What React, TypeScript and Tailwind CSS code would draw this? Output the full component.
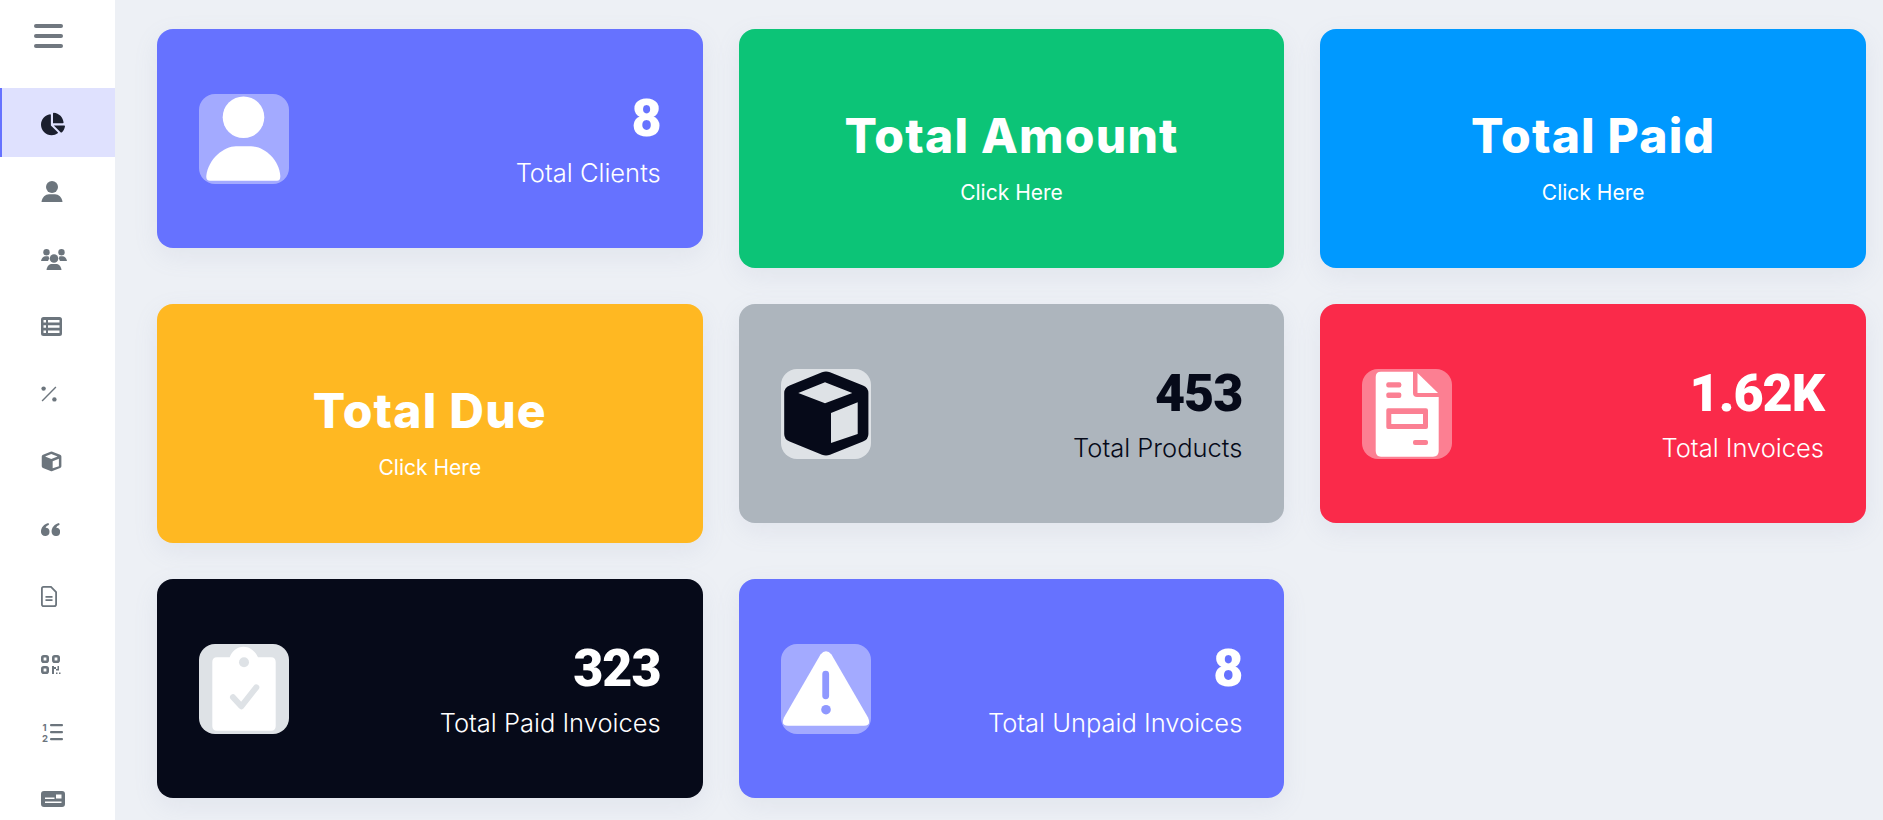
import type { ReactNode } from "react";
import { FaChartPie } from "react-icons/fa";

const boxPath =
  "M41 3.2Q45 1.6 49 3.2L82 16.4Q87.4 18.6 87.4 24V65Q87.4 70.4 82 72.6L49 85.8Q45 87.4 41 85.8L8.6 72.6Q3.2 70.4 3.2 65V24Q3.2 18.6 8.6 16.4ZM17.3 24L44 34.3L71.3 24L44 13.3ZM50 44V74L76.7 65V33.3Z";

function PersonIcon() {
  return (
    <svg viewBox="0 0 90 90" className="h-full w-full fill-white">
      <circle cx="44.5" cy="23.3" r="20.8" />
      <path d="M11 86.7Q7 86.7 7.3 82C9 65 25 52.3 37 52.3H52C65 52.3 80 65 81.3 82Q81.5 86.7 78 86.7Z" />
    </svg>
  );
}

function BoxIcon() {
  return (
    <svg viewBox="0 0 90 90" className="h-full w-full fill-[#060a19]">
      <path fillRule="evenodd" d={boxPath} />
    </svg>
  );
}

function FileIcon() {
  return (
    <svg viewBox="0 0 90 90" className="h-full w-full">
      <path
        className="fill-white"
        d="M19 2.7H51V24Q51 28 55 28H76.7V82Q76.7 87.7 71 87.7H19Q13.7 87.7 13.7 82V8Q13.7 2.7 19 2.7Z"
      />
      <path className="fill-white" d="M55.5 4L76 24H55.5Z" />
      <g className="fill-[#fb8093]">
        <rect x="24.3" y="13.3" width="15" height="5.2" rx="2" />
        <rect x="24.3" y="23.5" width="15" height="5.4" rx="2" />
        <rect x="51" y="71" width="15" height="5" rx="2" />
        <path
          fillRule="evenodd"
          d="M26 39.3H64Q66 39.3 66 41.3V58Q66 60 64 60H26Q24.3 60 24.3 58V41.3Q24.3 39.3 26 39.3ZM29.3 45V55H61V45Z"
        />
      </g>
    </svg>
  );
}

function ClipboardIcon() {
  return (
    <svg viewBox="0 0 90 90" className="h-full w-full">
      <path
        className="fill-white"
        d="M18 13.3H30.7C33 7 38 2.7 44.5 2.7S56 7 59 13.3H72Q76.7 13.3 76.7 18V82Q76.7 86.7 72 86.7H18Q13.3 86.7 13.3 82V18Q13.3 13.3 18 13.3Z"
      />
      <circle cx="45" cy="18.3" r="5" className="fill-[#dee2e6]" />
      <path
        d="M34 53.3L42.3 62.3L57.3 43.3"
        fill="none"
        stroke="#dee2e6"
        strokeWidth="6"
        strokeLinecap="round"
        strokeLinejoin="round"
      />
    </svg>
  );
}

function WarningIcon() {
  return (
    <svg viewBox="0 0 90 90" className="h-full w-full">
      <path
        className="fill-white"
        d="M39.5 10.5Q45 4 50.5 10.5L87 73.5Q90.5 81.7 83 81.7H7Q-0.5 81.7 3 73.5Z"
      />
      <rect x="41.3" y="26.7" width="6.8" height="28.5" rx="3.4" className="fill-[#8f98ff]" />
      <circle cx="45" cy="65.7" r="4.8" className="fill-[#8f98ff]" />
    </svg>
  );
}

const sidebarIcons: ReactNode[] = [
  <FaChartPie key="pie" size={24} className="text-[#1b1f2e]" />,
  <svg key="user" viewBox="0 0 22 21" className="h-[21px] w-[22px] fill-current">
    <circle cx="11" cy="6" r="6" />
    <path d="M0.5 21C1 16 4.5 13.2 8 13.2H14C17.5 13.2 21 16 21.5 21Z" />
  </svg>,
  <svg key="users" viewBox="0 0 26 21" className="h-[21px] w-[26px] fill-current">
    <circle cx="13" cy="9.5" r="4.3" />
    <path d="M5.5 21C6 17 8.5 15 10.5 15H15.5C17.5 15 20 17 20.5 21Z" />
    <circle cx="5.5" cy="3.2" r="3.2" />
    <circle cx="20.5" cy="3.2" r="3.2" />
    <path d="M0 12C0.5 9 2.5 7.3 4.5 7.3H7.5L8.2 9.5L7 12Z" />
    <path d="M26 12C25.5 9 23.5 7.3 21.5 7.3H18.5L17.8 9.5L19 12Z" />
  </svg>,
  <svg key="table" viewBox="0 0 21 19" className="h-[19px] w-[21px] fill-current">
    <path
      fillRule="evenodd"
      d="M2.5 0H18.5Q21 0 21 2.5V16.5Q21 19 18.5 19H2.5Q0 19 0 16.5V2.5Q0 0 2.5 0ZM2.5 3V5.5H5V3ZM7 3V5.5H18.5V3ZM2.5 8.2V10.8H5V8.2ZM7 8.2V10.8H18.5V8.2ZM2.5 13.5V16H5V13.5ZM7 13.5V16H18.5V13.5Z"
    />
  </svg>,
  <svg key="percent" viewBox="0 0 16 16" className="h-4 w-4 fill-current">
    <circle cx="2.6" cy="2.6" r="2.2" />
    <circle cx="13.4" cy="13.4" r="2.2" />
    <path d="M14.4 0.6L15.4 1.6L1.6 15.4L0.6 14.4Z" />
  </svg>,
  <svg key="box" viewBox="0 0 90 90" className="h-[21px] w-[21px] fill-current">
    <path fillRule="evenodd" d={boxPath} />
  </svg>,
  <svg key="quote" viewBox="0 0 19 13" className="h-[13px] w-[19px] fill-current">
    <path d="M4.2 13A4.2 4.2 0 0 1 0 8.5C0 4.5 3 1 7.5 0L8 1.8C6 2.6 5 3.6 4.6 4.8A4.1 4.1 0 0 1 4.2 13Z" />
    <path d="M14.8 13A4.2 4.2 0 0 1 10.6 8.5C10.6 4.5 13.6 1 18.1 0L18.6 1.8C16.6 2.6 15.6 3.6 15.2 4.8A4.1 4.1 0 0 1 14.8 13Z" />
  </svg>,
  <svg key="file" viewBox="0 0 16 21" className="h-[21px] w-4 fill-none stroke-current" strokeWidth="1.8">
    <path d="M2.5 0.9H10L15.1 6V18.2Q15.1 20.1 13.2 20.1H2.8Q0.9 20.1 0.9 18.2V2.8Q0.9 0.9 2.5 0.9Z" />
    <path d="M4.5 10.8H11.5M4.5 14.2H11.5" />
  </svg>,
  <svg key="qr" viewBox="0 0 20 19" className="h-[19px] w-5">
    <g className="fill-none stroke-current" strokeWidth="2.6">
      <rect x="1.3" y="1.3" width="5.4" height="5.4" rx="1.5" />
      <rect x="12.3" y="1.3" width="5.4" height="5.4" rx="1.5" />
      <rect x="1.3" y="12.3" width="5.4" height="5.4" rx="1.5" />
    </g>
    <path
      className="fill-current"
      d="M11 11H13V19H11ZM13 12H15V14H13ZM15 14H16.5V11H18V15.5H15ZM15 17.5H16.5V19H15ZM18 17.5H19.5V19H18Z"
    />
  </svg>,
  <svg key="list" viewBox="0 0 21 20" className="ml-[1px] h-5 w-[21px] fill-current">
    <text x="0.5" y="8.5" fontSize="9.5" fontWeight="700">1</text>
    <text x="0" y="19.5" fontSize="9.5" fontWeight="700">2</text>
    <rect x="8" y="2" width="13" height="2.2" rx="1" />
    <rect x="8" y="9" width="13" height="2.2" rx="1" />
    <rect x="8" y="16" width="13" height="2.2" rx="1" />
  </svg>,
  <svg key="card" viewBox="0 0 24 16" className="h-4 w-6 fill-current">
    <path
      fillRule="evenodd"
      d="M3 0H21Q24 0 24 3V13Q24 16 21 16H3Q0 16 0 13V3Q0 0 3 0ZM15 3.5V7.5H20.5V3.5ZM4 6.5V8H13.5V6.5ZM4 10.5V12H20.5V10.5Z"
    />
  </svg>,
];

type StatCardProps = {
  icon: ReactNode;
  value: string;
  label: string;
  cardClass: string;
  iconBoxClass: string;
};

function StatCard({ icon, value, label, cardClass, iconBoxClass }: StatCardProps) {
  return (
    <div className={`flex h-[219px] items-center justify-between rounded-2xl pl-[42px] pr-[42px] shadow-[0_8px_24px_rgba(140,150,180,0.12)] ${cardClass}`}>
      <div className={`h-[90px] w-[90px] overflow-hidden rounded-2xl ${iconBoxClass}`}>{icon}</div>
      <div className="mb-[4px] text-right">
        <div className="font-[Roboto,sans-serif] text-[52px] font-black leading-[72px] tracking-[-1px]">{value}</div>
        <div className="text-[25.5px] font-light leading-9">{label}</div>
      </div>
    </div>
  );
}

function LinkCard({ title, bgClass }: { title: string; bgClass: string }) {
  return (
    <div className={`flex h-[239px] flex-col items-center justify-center rounded-2xl pt-[10px] text-white shadow-[0_8px_24px_rgba(140,150,180,0.12)] ${bgClass}`}>
      <div className="text-[48px] font-extrabold leading-[72px] tracking-[1.2px]">{title}</div>
      <div className="mt-[6px] text-[21px] font-normal leading-[30px]">Click Here</div>
    </div>
  );
}

export default function App() {
  return (
    <div className="flex h-screen overflow-hidden bg-[#edf0f5] font-[Inter,sans-serif]">
      <aside className="w-[115px] shrink-0 overflow-hidden bg-white text-[#6c757d]">
        <div className="h-[88px] pl-[34px] pt-6">
          <svg viewBox="0 0 29 24" className="h-6 w-[29px] fill-[#70777f]">
            <rect width="29" height="4" y="0" rx="2" />
            <rect width="29" height="4" y="10" rx="2" />
            <rect width="29" height="4" y="20" rx="2" />
          </svg>
        </div>
        <nav>
          {sidebarIcons.map((icon, i) => (
            <div
              key={i}
              className={
                i === 0
                  ? "flex h-[68.5px] items-center border-l-2 border-[#6672ff] bg-[#dfe1fe] pl-[39px] pt-[3px]"
                  : "flex h-[67.5px] items-center pl-[41px] pt-[3px]"
              }
            >
              {icon}
            </div>
          ))}
        </nav>
      </aside>
      <main className="grid flex-1 grid-cols-3 content-start items-start gap-9 pl-[42px] pr-[17px] pt-[29px]">
        <StatCard
          icon={<PersonIcon />}
          value="8"
          label="Total Clients"
          cardClass="bg-[#6672ff] text-white"
          iconBoxClass="bg-white/40"
        />
        <LinkCard title="Total Amount" bgClass="bg-[#0cc477]" />
        <LinkCard title="Total Paid" bgClass="bg-[#0099ff]" />
        <LinkCard title="Total Due" bgClass="bg-[#ffb822]" />
        <StatCard
          icon={<BoxIcon />}
          value="453"
          label="Total Products"
          cardClass="bg-[#adb5bd] text-[#060a19]"
          iconBoxClass="bg-[#dee2e6]"
        />
        <StatCard
          icon={<FileIcon />}
          value="1.62K"
          label="Total Invoices"
          cardClass="bg-[#fa2a4a] text-white"
          iconBoxClass="bg-white/40"
        />
        <StatCard
          icon={<ClipboardIcon />}
          value="323"
          label="Total Paid Invoices"
          cardClass="bg-[#060a19] text-white"
          iconBoxClass="bg-[#dee2e6]"
        />
        <StatCard
          icon={<WarningIcon />}
          value="8"
          label="Total Unpaid Invoices"
          cardClass="bg-[#6672ff] text-white"
          iconBoxClass="bg-white/40"
        />
      </main>
    </div>
  );
}
